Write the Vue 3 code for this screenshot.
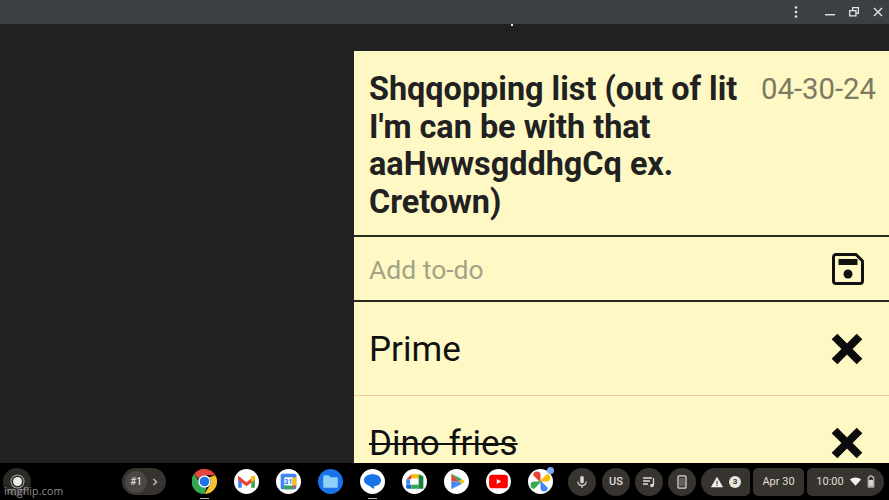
<template>
  <div class="screen">
    <!-- window title bar -->
    <header class="titlebar">
      <svg class="win-ico kebab" viewBox="0 0 12 14"><circle cx="6" cy="2.5" r="1.3" /><circle cx="6" cy="7" r="1.3" /><circle cx="6" cy="11.5" r="1.3" /></svg>
      <svg class="win-ico min" viewBox="0 0 12 12"><rect x="1" y="8" width="10" height="1.4" /></svg>
      <svg class="win-ico restore" viewBox="0 0 12 12"><path d="M4 1h7v7H8.600v2.600H1V4h3zM5.300 2.300V4h3.300v2.700h1.100V2.300zM2.300 5.300v4h5v-4z" fill-rule="evenodd" /></svg>
      <svg class="win-ico close" viewBox="0 0 12 12"><path d="M2 2l8 8M10 2l-8 8" stroke="#e4e6e8" stroke-width="1.4" fill="none" /></svg>
    </header>

    <main class="desk">
      <span class="stray-dot"></span>
      <section class="note">
        <div class="note-head">
          <h1 class="note-title">Shqqopping list (out of lit<br />I'm can be with that<br />aaHwwsgddhgCq ex.<br />Cretown)</h1>
          <span class="note-date">04-30-24</span>
        </div>
        <div class="add-row">
          <span class="add-hint">Add to-do</span>
          <svg class="save-ico" viewBox="0 0 32 32">
            <path d="M4 1.500h20l6.500 6.500v20a2.500 2.500 0 0 1-2.500 2.500H4A2.500 2.500 0 0 1 1.500 28V4A2.500 2.500 0 0 1 4 1.500z" fill="none" stroke="#111" stroke-width="3" stroke-linejoin="round" />
            <rect x="6.500" y="6" width="19" height="6" fill="#111" />
            <circle cx="16" cy="21" r="4.500" fill="#111" />
          </svg>
        </div>
        <div v-for="(item, i) in items" :key="i" class="todo" :class="{ last: i === items.length - 1 }">
          <span class="todo-text" :class="{ done: item.done }">{{ item.label }}</span>
          <svg class="x-ico" viewBox="0 0 32 32"><path d="M3.500 3.500l25 25M28.500 3.500l-25 25" stroke="#0c0c0c" stroke-width="8" fill="none" /></svg>
        </div>
      </section>
    </main>

    <!-- chromeos shelf -->
    <footer class="shelf">
      <span class="round launcher"><i class="rec"></i></span>
      <span class="desk-pill"><b>#1</b><svg viewBox="0 0 8 10" class="chev"><path d="M2.500 2l3 3-3 3" fill="none" stroke="#c9c7c2" stroke-width="1.3" /></svg></span>

      <div class="apps">
        <span class="app running">
          <svg viewBox="0 0 24 24">
            <path d="M12 0a12 12 0 0 1 10.400 6H12a6 6 0 0 0-5.600 3.800L2.200 4.600A12 12 0 0 1 12 0z" fill="#e8453c" />
            <path d="M22.400 6A12 12 0 0 1 12 24l5.200-9A6 6 0 0 0 16.500 8z" fill="#fbc02d" />
            <path d="M12 24A12 12 0 0 1 2.200 4.600l5 8.600A6 6 0 0 0 14 17.700z" fill="#34a853" />
            <circle cx="12" cy="12" r="6" fill="#fff" />
            <circle cx="12" cy="12" r="4.600" fill="#1a73e8" />
          </svg>
        </span>
        <span class="app plain">
          <svg viewBox="0 0 24 24">
            <path d="M4 6.500v11.500h3.500V9.500z" fill="#4285f4" />
            <path d="M16.500 9.500V18H20V6.500z" fill="#34a853" />
            <path d="M4 6.500l8 6.200 8-6.200v4l-8 6-8-6z" fill="#ea4335" />
            <path d="M16.500 7l3.500-.5v4l-3.500 2.600z" fill="#fbbc04" />
          </svg>
        </span>
        <span class="app plain">
          <svg viewBox="0 0 24 24">
            <rect x="4.500" y="4.500" width="15" height="15" rx="1.500" fill="#4285f4" />
            <rect x="8" y="8" width="8" height="8" fill="#fff" />
            <path d="M16 8h3.500v8H16z" fill="#fbbc04" />
            <path d="M8 16h8v3.500H8z" fill="#34a853" />
            <path d="M16 16h3.500L16 19.500z" fill="#ea4335" />
            <text x="12" y="14.400" class="cal-num">31</text>
          </svg>
        </span>
        <span class="app files">
          <svg viewBox="0 0 24 24"><path d="M5 7a1 1 0 0 1 1-1h4.200l1.800 1.800h6a1 1 0 0 1 1 1V17a1 1 0 0 1-1 1H6a1 1 0 0 1-1-1z" fill="#8ed1f8" /></svg>
        </span>
        <span class="app plain running">
          <svg viewBox="0 0 24 24"><path d="M12 5c4.500 0 8.200 2.200 8.200 5.800s-3.700 5.700-6.700 5.700v2.700c-1.500-.8-3-1.800-4.200-3C6.500 15 3.800 13.700 3.800 10.800 3.800 7.200 7.500 5 12 5z" fill="#1a73e8" /></svg>
        </span>
        <span class="app plain">
          <svg viewBox="0 0 24 24">
            <path d="M9 5h7v4H9z" fill="#fbbc04" />
            <path d="M9 5v5H4z" fill="#ea4335" />
            <path d="M4 10h4v5H4z" fill="#4285f4" />
            <path d="M4 15h5v4H5.500A1.500 1.500 0 0 1 4 17.500z" fill="#1967d2" />
            <path d="M9 15h7v4H9z" fill="#34a853" />
            <path d="M16 5v14l4.500 0V7z" fill="#188038" />
            <path d="M8 9.500h6v5H8z" fill="#fff" />
          </svg>
        </span>
        <span class="app plain">
          <svg viewBox="0 0 24 24">
            <path d="M7 4.500v7.500l7.500-0z" fill="#ea4335" />
            <path d="M7 12v7.500L14.500 12z" fill="#4285f4" />
            <path d="M7 4.500L14.500 12 17 9.500z" fill="#34a853" />
            <path d="M14.500 12L7 19.500l10-5z" fill="#4285f4" />
            <path d="M17 9.500L14.500 12l2.500 2.500L20 12z" fill="#fbbc04" />
          </svg>
        </span>
        <span class="app plain">
          <svg viewBox="0 0 24 24">
            <rect x="3" y="5.500" width="18" height="13" rx="3" fill="#f00" />
            <path d="M10.300 9.500v5l4.300-2.500z" fill="#fff" />
          </svg>
        </span>
        <span class="app plain badge">
          <svg viewBox="0 0 24 24">
            <path d="M12 12V5a3.500 3.500 0 0 0-7 0z" transform="translate(0 1)" fill="#ea4335" />
            <path d="M12 12h7a3.500 3.500 0 0 0 0-7z" transform="translate(-1 0)" fill="#fbbc04" />
            <path d="M12 12v7a3.500 3.500 0 0 0 7 0z" transform="translate(0 -1)" fill="#4285f4" />
            <path d="M12 12H5a3.500 3.500 0 0 0 0 7z" transform="translate(1 0)" fill="#34a853" />
          </svg>
        </span>
      </div>

      <span class="round mic">
        <svg viewBox="0 0 16 16"><rect x="6.200" y="2" width="3.600" height="7.500" rx="1.800" fill="#d8d6d1" /><path d="M3.800 7.500a4.200 4.200 0 0 0 8.400 0M8 11.700V14" fill="none" stroke="#d8d6d1" stroke-width="1.200" /></svg>
      </span>
      <span class="round tray-us">US</span>
      <span class="round tray-q">
        <svg viewBox="0 0 16 16"><path d="M2 4h9M2 7h7M2 10h5" stroke="#e0ded9" stroke-width="1.300" fill="none" /><path d="M12.500 4v7" stroke="#e0ded9" stroke-width="1.300" /><circle cx="11" cy="11.500" r="1.800" fill="#e0ded9" /></svg>
      </span>
      <span class="round tray-ph">
        <svg viewBox="0 0 16 16"><rect x="4" y="1.800" width="8" height="12.400" rx="1.200" fill="none" stroke="#dedcd7" stroke-width="1.300" /><rect x="4" y="4" width="8" height="8" fill="#8b8984" opacity=".5" /></svg>
      </span>
      <span class="chip warn">
        <svg viewBox="0 0 16 16" class="warn-ico"><path d="M8 2l7 12H1z" fill="#f3f1ec" /><path d="M8 6.500v4M8 11.500v1.200" stroke="#37342f" stroke-width="1.300" /></svg>
        <em class="count">3</em>
      </span>
      <span class="chip date">Apr 30</span>
      <span class="chip clock">
        10:00
        <svg viewBox="0 0 16 14" class="wifi"><path d="M8 12.500L.8 4.500C4.800 1 11.200 1 15.200 4.500z" fill="#f3f1ec" /></svg>
        <svg viewBox="0 0 10 16" class="batt"><path d="M3.500 1h3v1.500H8.500v12.500h-7V2.500h2z" fill="none" stroke="#e8e6e1" stroke-width="1.200" /><rect x="2.500" y="6" width="5" height="8" fill="#d8d6d1" /></svg>
      </span>

      <span class="watermark">imgflip.com</span>
    </footer>
  </div>
</template>

<script setup>
const items = [
  { label: 'Prime', done: false },
  { label: 'Dino fries', done: true },
]
</script>

<style>
html, body { margin: 0; background: #202124; overflow: hidden; }
</style>

<style scoped>
.screen {
  width: 889px;
  height: 500px;
  display: flex;
  flex-direction: column;
  font-family: Roboto, "Liberation Sans", sans-serif;
  overflow: hidden;
}

/* title bar */
.titlebar {
  height: 24px;
  flex-shrink: 0;
  background: #3c4043;
  display: flex;
  align-items: center;
  justify-content: flex-end;
  padding-right: 5px;
  box-sizing: border-box;
}
.win-ico { fill: #e4e6e8; display: block; }
.kebab { width: 12px; height: 14px; margin-right: 22px; }
.min { width: 12px; height: 12px; margin-right: 12px; }
.restore { width: 12px; height: 12px; margin-right: 12px; }
.close { width: 12px; height: 12px; }

/* main area */
.desk {
  flex: 1;
  min-height: 0;
  background: #202122;
  display: flex;
  justify-content: flex-end;
  padding-top: 27px;
  position: relative;
}
.stray-dot {
  position: absolute;
  left: 511px;
  top: 0;
  width: 2px;
  height: 2px;
  background: #e8e8e8;
}
.note {
  width: 535px;
  background: #fef8c5;
  overflow: hidden;
  color: #202020;
}
.note-head {
  height: 186px;
  box-sizing: border-box;
  border-bottom: 2px solid #2a2a22;
  display: flex;
  align-items: flex-start;
  justify-content: space-between;
  padding: 20px 13px 0 15px;
}
.note-title {
  margin: 0;
  font-size: 32.400px;
  font-weight: 700;
  line-height: 37.500px;
  color: #212121;
  white-space: nowrap;
}
.note-date {
  font-size: 29.300px;
  line-height: 37.500px;
  color: #7c7a63;
}
.add-row {
  height: 65px;
  box-sizing: border-box;
  border-bottom: 2px solid #2a2a22;
  display: flex;
  align-items: center;
  justify-content: space-between;
  padding: 0 25px 0 15px;
}
.add-hint { font-size: 26.500px; color: #a5a386; margin-top: 2px; }
.save-ico { width: 32px; height: 32px; display: block; }
.todo {
  height: 94px;
  box-sizing: border-box;
  border-bottom: 1px solid #f0c9a6;
  display: flex;
  align-items: center;
  justify-content: space-between;
  padding: 0 26px 0 15px;
  flex-shrink: 0;
}
.todo.last { border-bottom: 0; }
.todo-text { font-size: 35px; color: #111; margin-top: 1px; }
.todo-text.done { text-decoration: line-through; text-decoration-thickness: 2px; }
.x-ico { width: 32px; height: 32px; display: block; }

/* shelf */
.shelf {
  height: 37px;
  flex-shrink: 0;
  background: #000;
  display: flex;
  align-items: center;
  padding-left: 3px;
  position: relative;
  box-sizing: border-box;
  color: #e0ded9;
}
.round {
  width: 28px;
  height: 28px;
  border-radius: 50%;
  background: #37342f;
  display: flex;
  align-items: center;
  justify-content: center;
  flex-shrink: 0;
}
.round svg { width: 16px; height: 16px; }
.launcher { background: #2b2926; }
.rec {
  width: 9px;
  height: 9px;
  background: #ececec;
  border-radius: 50%;
  box-shadow: 0 0 0 1.500px #2b2926, 0 0 0 2.500px #a8a6a2;
}
.desk-pill {
  margin-left: 91px;
  width: 44px;
  height: 27px;
  border-radius: 14px;
  background: #37342f;
  display: flex;
  align-items: center;
  flex-shrink: 0;
}
.desk-pill b {
  width: 22px;
  height: 22px;
  margin-left: 3px;
  border-radius: 50%;
  background: #4b4843;
  font-weight: 500;
  font-size: 10px;
  display: flex;
  align-items: center;
  justify-content: center;
}
.chev { width: 8px; height: 10px; margin-left: 4px; }
.apps {
  display: flex;
  gap: 17px;
  margin-left: 26px;
}
.app {
  width: 25px;
  height: 25px;
  border-radius: 50%;
  position: relative;
  flex-shrink: 0;
}
.app svg { width: 25px; height: 25px; display: block; }
.plain { background: #fff; }
.files { background: #1a73e8; }
.running::after {
  content: "";
  position: absolute;
  left: 8px;
  bottom: -5px;
  width: 9px;
  height: 1.500px;
  background: #b5b3ae;
}
.badge::after {
  content: "";
  position: absolute;
  right: -1px;
  top: -2px;
  width: 7px;
  height: 7px;
  border-radius: 50%;
  background: #7baaf7;
}
.cal-num {
  font-size: 6.500px;
  font-weight: 700;
  fill: #1a73e8;
  text-anchor: middle;
}
.mic { margin-left: 15px; }
.tray-us { margin-left: 6px; font-size: 11px; font-weight: 500; }
.tray-q { margin-left: 5px; }
.tray-ph { margin-left: 5px; }
.chip {
  height: 28px;
  background: #37342f;
  display: flex;
  align-items: center;
  justify-content: center;
  flex-shrink: 0;
  font-size: 11px;
  box-sizing: border-box;
}
.warn {
  width: 49px;
  margin-left: 5px;
  border-radius: 14px 5px 5px 14px;
  gap: 5px;
}
.warn-ico { width: 14px; height: 14px; }
.count {
  width: 12px;
  height: 12px;
  border-radius: 50%;
  background: #e8e6e1;
  color: #37342f;
  font-style: normal;
  font-size: 8px;
  font-weight: 700;
  display: flex;
  align-items: center;
  justify-content: center;
}
.date {
  width: 51px;
  margin-left: 3px;
  border-radius: 5px;
}
.clock {
  width: 77px;
  margin-left: 3px;
  border-radius: 5px 14px 14px 5px;
  gap: 5px;
}
.wifi { width: 13px; height: 11px; }
.batt { width: 8px; height: 13px; }
.watermark {
  position: absolute;
  left: 4px;
  top: 21px;
  font-family: "Open Sans", "Liberation Sans", sans-serif;
  font-size: 10.500px;
  letter-spacing: 0.200px;
  color: rgba(255, 255, 255, 0.55);
}
</style>
